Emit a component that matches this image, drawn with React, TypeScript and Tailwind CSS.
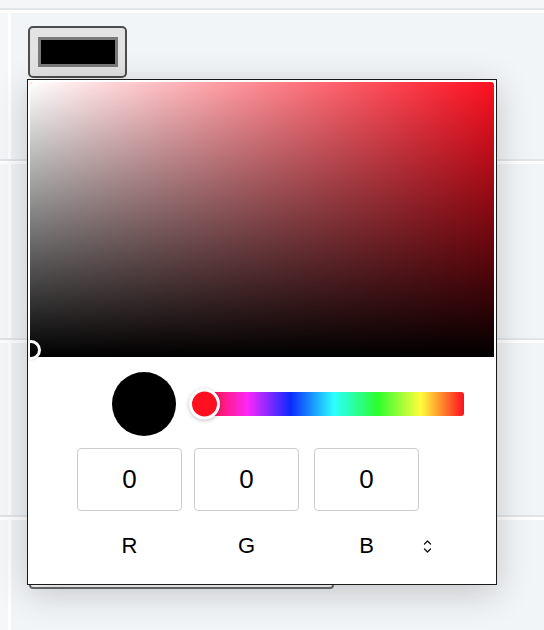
import React from "react";

function Sep() {
  return (
    <div className="flex flex-col">
      <div className="h-[2px] bg-[#e3e6e9]" />
      <div className="h-[3px] bg-white" />
    </div>
  );
}

function Row({ h, children }: { h: string; children?: React.ReactNode }) {
  return (
    <div className={`flex ${h}`}>
      <div className="w-2 bg-[#f5f7f8]" />
      <div className="w-[3px] bg-white" />
      <div className="flex-1 relative">{children}</div>
    </div>
  );
}

function Field({ value, label, className }: { value: string; label: string; className?: string }) {
  return (
    <div className={`flex flex-col w-[105px] ${className ?? ""}`}>
      <div className="h-[63px] border-[1.5px] border-[#cccccc] rounded-[4px] flex items-center justify-center text-[26px] text-black">
        {value}
      </div>
      <div className="mt-[23px] h-6 flex items-center justify-center text-[22px] leading-6 text-black">
        {label}
      </div>
    </div>
  );
}

export default function App() {
  return (
    <div className="relative w-[544px] h-[630px] overflow-hidden bg-[#f2f5f7] font-['Liberation_Sans',Arial,sans-serif]">
      <div className="flex flex-col h-full">
        <div className="h-2 bg-[#f5f6f8]" />
        <Sep />
        <Row h="h-[146px]">
          <div className="ml-[17px] mt-[13px] w-[99px] h-[52px] border-2 border-[#4d4d4d] rounded-[5px] bg-[#e3e3e3] flex items-center justify-center">
            <div className="w-20 h-[30px] bg-black border-[3px] border-[#7a7a7a]" />
          </div>
        </Row>
        <Sep />
        <Row h="h-[174px]" />
        <Sep />
        <Row h="h-[172px]" />
        <Sep />
        <div className="flex flex-1">
          <div className="w-2 bg-[#f5f7f8]" />
          <div className="w-[3px] bg-white" />
          <div className="flex-1" />
        </div>
      </div>

      {/* element underneath the popover */}
      <div className="absolute left-[29px] top-[500px] w-[305px] h-[89px] border-2 border-[#6e6e6e] rounded-[4px] bg-white" />

      {/* popover */}
      <div className="absolute left-[27px] top-[79px] w-[470px] h-[506px] bg-white border border-[#1a1a1a] overflow-hidden shadow-[0_8px_34px_rgba(0,0,0,0.2)] flex flex-col">
        <div className="relative mx-[2px] mt-[2px] h-[275px]">
          <div className="absolute inset-0 rounded-t-[3px] bg-[#fe1020] overflow-hidden">
            <div className="absolute inset-0 bg-[linear-gradient(to_right,#ffffff,rgba(255,255,255,0))]" />
            <div className="absolute inset-0 bg-[linear-gradient(to_top,#000000,rgba(0,0,0,0))]" />
          </div>
          <div className="absolute left-[-9px] top-[258px] w-[20px] h-[20px] rounded-full border-[3px] border-white shadow-[0_0_1px_rgba(0,0,0,0.5)]" />
        </div>

        <div className="flex items-center mt-[15px] pl-[84px]">
          <div className="w-16 h-16 rounded-full bg-black" />
          <div className="relative ml-[28px] w-[260px] h-6 rounded-[3px] bg-[linear-gradient(to_right,#fe1020_0%,#fd28fb_16.7%,#0b2aff_33.3%,#2cfffe_50%,#2bfd2f_66.7%,#fffd3a_83.3%,#fe1020_100%)]">
            <div className="absolute left-[-15px] top-1/2 -translate-y-1/2 w-[31px] h-[31px] rounded-full bg-[#fe1020] border-[3px] border-white shadow-[0_1px_4px_rgba(0,0,0,0.25)]" />
          </div>
        </div>

        <div className="flex mt-[12px] pl-[49px]">
          <Field value="0" label="R" />
          <Field value="0" label="G" className="ml-[12px]" />
          <Field value="0" label="B" className="ml-[15px]" />
          <div className="flex flex-col ml-[4px]">
            <div className="h-[63px]" />
            <div className="mt-[23px] h-6 flex items-center">
              <svg width="9" height="15" viewBox="0 0 9 15" fill="none" stroke="#111" strokeWidth="1.3" strokeLinecap="round" strokeLinejoin="round">
                <path d="M1.5 5 L4.5 2 L7.5 5" />
                <path d="M1.5 10 L4.5 13 L7.5 10" />
              </svg>
            </div>
          </div>
        </div>
      </div>
    </div>
  );
}
